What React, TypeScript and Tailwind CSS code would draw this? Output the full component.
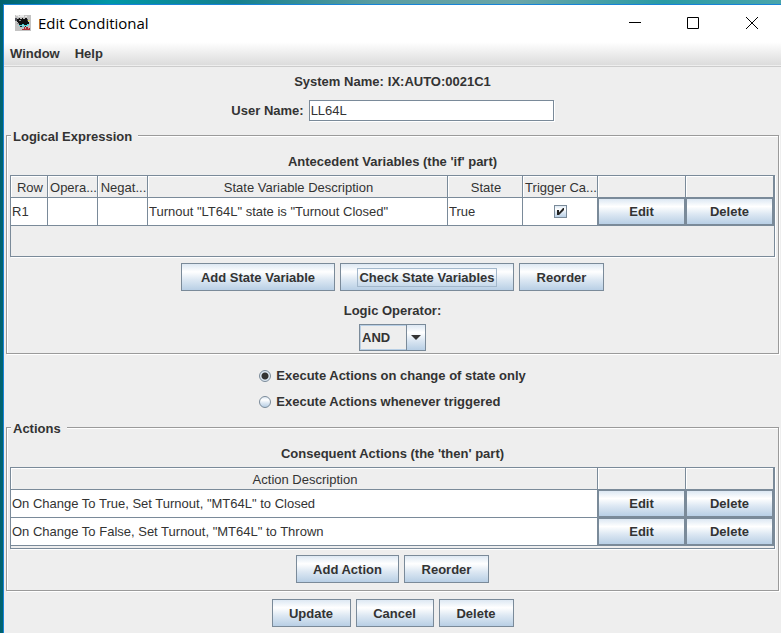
import { useState, type ReactNode } from 'react'
import clsx from 'clsx'

const gradient = 'bg-[linear-gradient(#dde8f3_0%,#ffffff_30%,#dde8f3_60%,#b8cfe5_100%)]'
const radioClass = clsx(
  gradient,
  'h-3 w-3 appearance-none rounded-full border border-[#7a8a99]',
  'checked:bg-[radial-gradient(circle,#333333_0_3px,#dde8f3_4px)]'
)

const antecedents = [
  { row: 'R1', operator: '', negate: '', description: 'Turnout "LT64L" state is "Turnout Closed"', state: 'True' },
]

const actions = [
  'On Change To True, Set Turnout, "MT64L" to Closed',
  'On Change To False, Set Turnout, "MT64L" to Thrown',
]

function Button({ children, className, focused }: { children: ReactNode; className?: string; focused?: boolean }) {
  return (
    <button className={clsx(gradient, 'flex h-7 items-center justify-center border border-[#7a8a99] font-bold', className)}>
      <span className={clsx('border px-px', focused ? 'border-[#a3b8cc]' : 'border-transparent')}>{children}</span>
    </button>
  )
}

function CellButton({ children }: { children: ReactNode }) {
  return (
    <td className="border-r border-b border-[#7a8a99] p-0">
      <button className={clsx(gradient, 'block h-[27px] w-full border border-[#7a8a99] font-bold')}>{children}</button>
    </td>
  )
}

function Group({ title, className, children }: { title: string; className?: string; children: ReactNode }) {
  return (
    <fieldset
      className={clsx(
        'mr-[2px] ml-[2px] min-w-0 border border-[#9a9a9a] px-[3px] shadow-[inset_1px_1px_0_#fff,1px_1px_0_#fff]',
        className
      )}
    >
      <legend className="ml-px bg-[#eeeeee] pt-[2px] pr-[6px] pl-[2px] font-bold">{title}</legend>
      {children}
    </fieldset>
  )
}

function Th({ children }: { children?: ReactNode }) {
  return (
    <th className="h-[22px] truncate border-r border-b border-[#7a8a99] bg-[#eeeeee] p-0 pt-[2px] pl-[2px] text-center font-normal shadow-[inset_1px_1px_0_#fff]">
      {children}
    </th>
  )
}

function Td({ children }: { children?: ReactNode }) {
  return <td className="h-7 truncate border-r border-b border-[#7a8a99] bg-white p-0 pl-px">{children}</td>
}

function TableFrame({ className, children }: { className?: string; children: ReactNode }) {
  return (
    <div className={clsx('mt-[5px] border border-[#7a8a99] shadow-[1px_1px_0_#fff]', className)}>
      <table className="w-full table-fixed border-separate border-spacing-0">{children}</table>
    </div>
  )
}

function AppIcon() {
  return (
    <svg width="16" height="16" viewBox="0 0 16 16" shapeRendering="crispEdges" aria-hidden="true">
      <path fill="#c3c3c3" d="M0 0h16v16H0z" />
      <path fill="#e8e8e8" d="M1 0h3v1h-3zM5 0h4v1h-4zM3 1h6v1h-6zM10 1h2v1h-2z" />
      <path fill="#54545c" d="M0 3h2v3h-2zM11 4h2v3h-2z" />
      <path fill="#111" d="M2 4h1v-1h2v1h2v-1h1v1h2v-1h2v3h1v1h1v2h-1v1h-9v-1h-1v-2h-1z" />
      <path fill="#8b8b90" d="M3 3h1v1h-1zM4 5h2v1h-2zM2 8h2v1h-2z" />
      <path fill="#e4dc54" d="M13 5h2v1h-2z" />
      <path fill="#45d9dc" d="M4 10h3v1h-3zM7 9h2v1h-2zM9 10h4v1h-4zM7 11h2v1h-2zM12 9h2v1h-2z" />
      <path fill="#222" d="M5 11h2v1h-2zM10 11h1v1h-1z" />
      <path fill="#ad2f36" d="M9 12h1v1h-1zM11 12h2v1h-2zM8 14h1v-1h6v2h-8v-1z" />
      <path fill="#d98b8e" d="M10 13h1v1h-1zM13 13h1v1h-1z" />
    </svg>
  )
}

function TitleBar() {
  return (
    <header className="flex h-[37px] items-center bg-white pb-px pl-[11px]">
      <AppIcon />
      <h1 className="ml-[7px] flex-1 font-['Open_Sans',sans-serif] text-[15px] leading-5 text-black">Edit Conditional</h1>
      <div className="flex text-black">
        <button aria-label="Minimize" className="flex h-9 w-[59px] items-center justify-center">
          <svg width="12" height="12" viewBox="0 0 12 12"><path d="M0 5.5h12" stroke="currentColor" /></svg>
        </button>
        <button aria-label="Maximize" className="flex h-9 w-[58px] items-center justify-center">
          <svg width="12" height="12" viewBox="0 0 12 12"><path d="M.5.5h11v11H.5z" fill="none" stroke="currentColor" /></svg>
        </button>
        <button aria-label="Close" className="flex h-9 w-[59px] items-center justify-center">
          <svg width="12" height="12" viewBox="0 0 12 12"><path d="M0 0l12 12M12 0L0 12" stroke="currentColor" /></svg>
        </button>
      </div>
    </header>
  )
}

export default function App() {
  const [userName, setUserName] = useState('LL64L')
  const [operator, setOperator] = useState('AND')
  const [trigger, setTrigger] = useState(true)
  const [mode, setMode] = useState('change')

  return (
    <div className="flex min-h-screen flex-col bg-[linear-gradient(90deg,#00626f_0%,#0097a7_14%,#14808e_30%,#5a9da1_48%,#6ba6a8_66%,#299ba5_85%,#4aa5ab_100%)] pt-1 pl-[3px] font-['Liberation_Sans',Arial,sans-serif] text-[13px] leading-[17px] text-[#333333]">
      <div className="flex-1 border-t border-l border-[#1883d7] bg-[#eeeeee]">
        <TitleBar />
        <nav className="flex h-[25px] gap-[15px] border-b border-[#cccccc] bg-[linear-gradient(#ffffff,#dadada)] pt-[3px] pl-[6px] font-bold shadow-[inset_0_-1px_0_#eeeeee]">
          <button className="h-[17px] font-bold">Window</button>
          <button className="h-[17px] font-bold">Help</button>
        </nav>

        <main className="pt-[6px] pb-[5px]">
          <div className="flex justify-center gap-1 font-bold">
            <span>System Name:</span>
            <span>IX:AUTO:0021C1</span>
          </div>
          <div className="mt-[10px] flex items-center justify-center gap-[5px]">
            <label htmlFor="userName" className="font-bold">User Name:</label>
            <input
              id="userName"
              type="text"
              value={userName}
              onChange={(e) => setUserName(e.target.value)}
              className="h-[21px] w-[245px] border border-[#7a8a99] bg-white pl-px shadow-[1px_1px_0_#fff] outline-none"
            />
          </div>

          {/* The 'if' part */}
          <Group title="Logical Expression" className="mt-[5px] pb-[2px]">
            <h2 className="mt-2 text-center font-bold">Antecedent Variables (the 'if' part)</h2>
            <TableFrame className="h-[82px]">
              <colgroup>
                <col className="w-[37px]" />
                <col className="w-[50px]" />
                <col className="w-[50px]" />
                <col />
                <col className="w-[75px]" />
                <col className="w-[75px]" />
                <col className="w-[88px]" />
                <col className="w-[88px]" />
              </colgroup>
              <thead>
                <tr>
                  <Th>Row</Th>
                  <Th>Opera...</Th>
                  <Th>Negat...</Th>
                  <Th>State Variable Description</Th>
                  <Th>State</Th>
                  <Th>Trigger Ca...</Th>
                  <Th />
                  <Th />
                </tr>
              </thead>
              <tbody>
                {antecedents.map((a) => (
                  <tr key={a.row}>
                    <Td>{a.row}</Td>
                    <Td>{a.operator}</Td>
                    <Td>{a.negate}</Td>
                    <Td>{a.description}</Td>
                    <Td>{a.state}</Td>
                    <Td>
                      <label className="relative mx-auto block h-[13px] w-[13px]">
                        <input
                          type="checkbox"
                          aria-label="Trigger Calculation"
                          checked={trigger}
                          onChange={(e) => setTrigger(e.target.checked)}
                          className={clsx(gradient, 'block h-[13px] w-[13px] appearance-none border border-[#7a8a99]')}
                        />
                        {trigger && (
                          <svg className="pointer-events-none absolute inset-0" width="13" height="13" viewBox="0 0 13 13">
                            <path d="M3 5h2v2.5L9 3h1v2L5 10H3z" fill="#222222" />
                          </svg>
                        )}
                      </label>
                    </Td>
                    <CellButton>Edit</CellButton>
                    <CellButton>Delete</CellButton>
                  </tr>
                ))}
              </tbody>
            </TableFrame>
            <div className="mt-[6px] flex justify-center gap-[5px]">
              <Button className="w-[154px]">Add State Variable</Button>
              <Button className="w-[174px]" focused>Check State Variables</Button>
              <Button className="w-[85px]">Reorder</Button>
            </div>
            <div className="mt-[11px] flex flex-col items-center gap-[5px] font-bold">
              <label htmlFor="operator">Logic Operator:</label>
              <div className="relative flex">
                <select
                  id="operator"
                  value={operator}
                  onChange={(e) => setOperator(e.target.value)}
                  className="h-[27px] w-[67px] appearance-none border border-[#7a8a99] bg-[#eeeeee] pl-[2px] font-bold shadow-[inset_0_0_0_1px_#b8cfe5] outline-none"
                >
                  <option>AND</option>
                  <option>OR</option>
                  <option>Mixed</option>
                </select>
                <span className={clsx(gradient, 'pointer-events-none absolute top-0 right-0 flex h-[27px] w-5 items-center justify-center border border-[#7a8a99]')}>
                  <svg width="10" height="5" viewBox="0 0 10 5"><path d="M0 0h10L5 5z" fill="#333333" /></svg>
                </span>
              </div>
            </div>
          </Group>

          <div className="mt-[13px] flex justify-center font-bold">
            <div className="flex flex-col gap-[9px]">
              <label className="flex items-center gap-[5px]">
                <input type="radio" name="mode" checked={mode === 'change'} onChange={() => setMode('change')} className={radioClass} />
                Execute Actions on change of state only
              </label>
              <label className="flex items-center gap-[5px]">
                <input type="radio" name="mode" checked={mode === 'always'} onChange={() => setMode('always')} className={radioClass} />
                Execute Actions whenever triggered
              </label>
            </div>
          </div>

          {/* The 'then' part */}
          <Group title="Actions" className="mt-2 pb-[7px]">
            <h2 className="mt-2 text-center font-bold">Consequent Actions (the 'then' part)</h2>
            <TableFrame className="pb-[2px]">
              <colgroup>
                <col />
                <col className="w-[88px]" />
                <col className="w-[88px]" />
              </colgroup>
              <thead>
                <tr>
                  <Th>Action Description</Th>
                  <Th />
                  <Th />
                </tr>
              </thead>
              <tbody>
                {actions.map((action) => (
                  <tr key={action}>
                    <Td>{action}</Td>
                    <CellButton>Edit</CellButton>
                    <CellButton>Delete</CellButton>
                  </tr>
                ))}
              </tbody>
            </TableFrame>
            <div className="mt-[6px] flex justify-center gap-[5px]">
              <Button className="w-[103px]">Add Action</Button>
              <Button className="w-[85px]">Reorder</Button>
            </div>
          </Group>

          <div className="mt-2 flex justify-center gap-[5px]">
            <Button className="w-[79px]">Update</Button>
            <Button className="w-[78px]">Cancel</Button>
            <Button className="w-[75px]">Delete</Button>
          </div>
        </main>
      </div>
    </div>
  )
}
